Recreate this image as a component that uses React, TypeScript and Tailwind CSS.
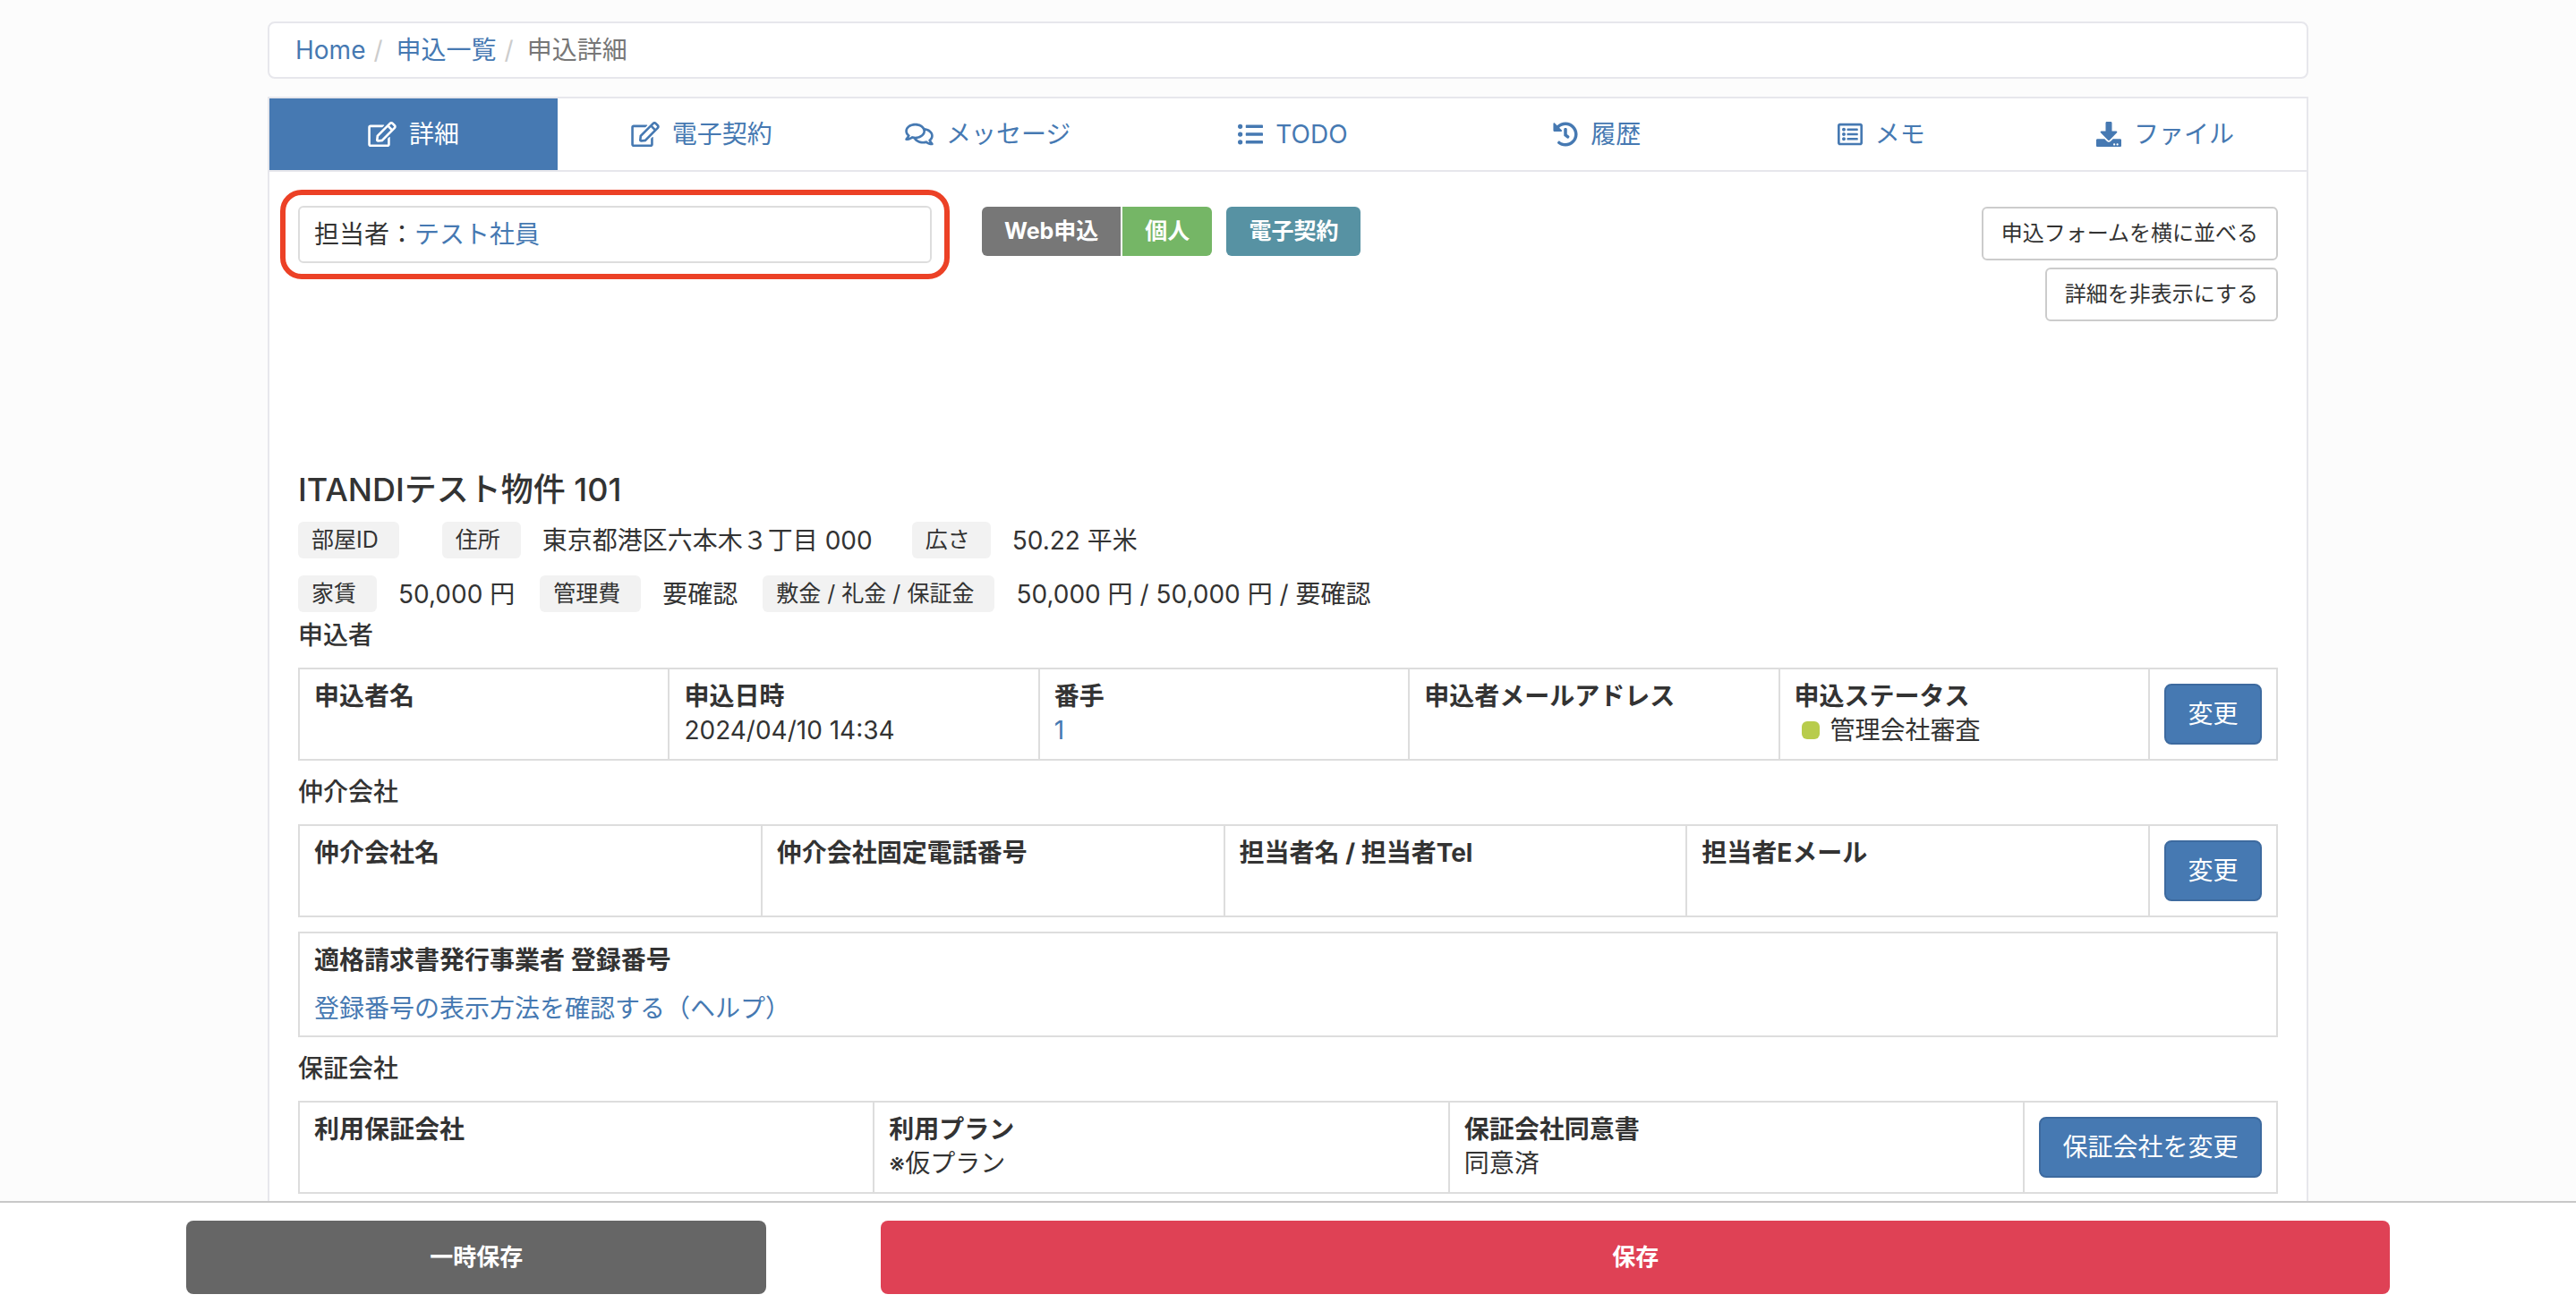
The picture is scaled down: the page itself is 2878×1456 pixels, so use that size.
import {ReactNode} from "react";
import {FaDownload, FaHistory, FaListUl, FaRegComments, FaRegEdit, FaRegListAlt} from "react-icons/fa";

const abas = [
    { titulo: "詳細", icone: FaRegEdit, tamanho: "h-7 w-8", ativa: true },
    { titulo: "電子契約", icone: FaRegEdit, tamanho: "h-7 w-8", ativa: false },
    { titulo: "メッセージ", icone: FaRegComments, tamanho: "h-7 w-8", ativa: false },
    { titulo: "TODO", icone: FaListUl, tamanho: "size-7", ativa: false },
    { titulo: "履歴", icone: FaHistory, tamanho: "size-7", ativa: false },
    { titulo: "メモ", icone: FaRegListAlt, tamanho: "size-7", ativa: false },
    { titulo: "ファイル", icone: FaDownload, tamanho: "size-7", ativa: false },
]

type Coluna = { titulo: string, valor?: ReactNode }

function Etiqueta({children}: { children: ReactNode }) {
    return (
        <dt className="rounded-md bg-[#f2f2f2] pl-[15px] pr-[23px] text-[25px] leading-[41px]">{children}</dt>
    )
}

function Tabela({colunas, botao, largura}: { colunas: Coluna[], botao: string, largura: string }) {
    return (
        <table className="w-full table-fixed border-collapse border-2 border-[#ddd]">
            <tbody>
                <tr className="h-[102px]">
                    {colunas.map(coluna => (
                        <td key={coluna.titulo} className="border-2 border-[#ddd] px-4 align-top pt-[11px] leading-[38px]">
                            <div className="font-bold">{coluna.titulo}</div>
                            <div>{coluna.valor}</div>
                        </td>
                    ))}
                    <td className={`border-2 border-[#ddd] text-center align-middle ${largura}`}>
                        <button type="button" className="rounded-lg border-2 border-[#3d6a9f] bg-[#4679b2] px-6 py-3 text-white">{botao}</button>
                    </td>
                </tr>
            </tbody>
        </table>
    )
}

export default function App() {
    return (
        <div className="min-h-screen bg-[#fcfcfc] font-[Inter,'Noto_Sans_CJK_JP',sans-serif] text-[28px] leading-[40px] text-[#333]">
            <div className="mx-auto flex min-h-screen max-w-[2280px] flex-col pt-6">
                <nav className="rounded-lg border-2 border-[#e7e7ec] bg-white px-[29px] py-[10px]">
                    <ol className="flex">
                        <li><a href="#" className="text-[#4679b2]">Home</a></li>
                        <li><span className="px-[9px] text-[#ccc]">/</span><a href="#" className="ml-[6px] text-[#4679b2]">申込一覧</a></li>
                        <li className="text-[#777]"><span className="px-[9px] text-[#ccc]">/</span><span className="ml-[6px]">申込詳細</span></li>
                    </ol>
                </nav>

                <main className="mt-5 grow border-2 border-b-0 border-[#e7e7ec] bg-white pb-[122px]">
                    <nav className="grid grid-cols-[322fr_322fr_318fr_364fr_316fr_319fr_316fr] border-b-2 border-[#e7e7ec]">
                        {abas.map(aba => (
                            <a
                                key={aba.titulo}
                                href="#"
                                className={`flex h-20 items-center justify-center gap-[14px] ${aba.ativa ? "bg-[#4679b2] text-white" : "text-[#4679b2]"}`}
                            >
                                <aba.icone className={aba.tamanho}/>
                                {aba.titulo}
                            </a>
                        ))}
                    </nav>

                    <div className="px-8">
                        <div className="flex h-[335px] items-start pt-[39px]">
                            <div className="-mx-5 -mt-[19px] w-[748px] rounded-3xl border-6 border-[#ec4126] px-[14px] py-3">
                                <div className="rounded-md border-2 border-[#ddd] px-4 py-[10px]">
                                    担当者：<a href="#" className="text-[#4679b2]">テスト社員</a>
                                </div>
                            </div>
                            <div className="ml-14 flex text-[25px] font-bold leading-[55px] text-white">
                                <span className="rounded-l-md bg-[#777] px-[25px]">Web申込</span>
                                <span className="ml-[2px] rounded-r-md bg-[#75b666] px-[25px]">個人</span>
                                <span className="ml-4 rounded-md bg-[#5792a3] px-[25px]">電子契約</span>
                            </div>
                            <div className="ml-auto flex flex-col items-end gap-2 text-2xl">
                                <button type="button" className="h-[60px] rounded-md border-2 border-[#ccc] px-5">申込フォームを横に並べる</button>
                                <button type="button" className="h-[60px] rounded-md border-2 border-[#ccc] px-5">詳細を非表示にする</button>
                            </div>
                        </div>

                        <h1 className="text-4xl font-medium">ITANDIテスト物件 101</h1>
                        <dl className="mt-4 flex items-center">
                            <Etiqueta>部屋ID</Etiqueta>
                            <dd className="mx-6"></dd>
                            <Etiqueta>住所</Etiqueta>
                            <dd className="ml-6 mr-11">東京都港区六本木３丁目 000</dd>
                            <Etiqueta>広さ</Etiqueta>
                            <dd className="ml-6">50.22 平米</dd>
                        </dl>
                        <dl className="mt-[19px] flex items-center">
                            <Etiqueta>家賃</Etiqueta>
                            <dd className="ml-6 mr-7">50,000 円</dd>
                            <Etiqueta>管理費</Etiqueta>
                            <dd className="ml-6 mr-7">要確認</dd>
                            <Etiqueta>敷金 / 礼金 / 保証金</Etiqueta>
                            <dd className="ml-6">50,000 円 / 50,000 円 / 要確認</dd>
                        </dl>

                        <h2 className="mb-4 mt-[6px] font-medium">申込者</h2>
                        <Tabela
                            largura="w-[143px]"
                            botao="変更"
                            colunas={[
                                { titulo: "申込者名" },
                                { titulo: "申込日時", valor: "2024/04/10 14:34" },
                                { titulo: "番手", valor: <a href="#" className="text-[#4679b2]">1</a> },
                                { titulo: "申込者メールアドレス" },
                                { titulo: "申込ステータス", valor: (
                                    <span className="flex items-center pl-2">
                                        <span className="mr-3 size-5 rounded-md bg-[#b8cc4c]"></span>
                                        管理会社審査
                                    </span>
                                ) },
                            ]}
                        />

                        <h2 className="mb-4 mt-[15px] font-medium">仲介会社</h2>
                        <Tabela
                            largura="w-[143px]"
                            botao="変更"
                            colunas={[
                                { titulo: "仲介会社名" },
                                { titulo: "仲介会社固定電話番号" },
                                { titulo: "担当者名 / 担当者Tel" },
                                { titulo: "担当者Eメール" },
                            ]}
                        />
                        <div className="mt-4 border-2 border-[#ddd] px-4 py-[10px]">
                            <div className="font-bold">適格請求書発行事業者 登録番号</div>
                            <a href="#" className="mt-[14px] block text-[#4679b2]">登録番号の表示方法を確認する（ヘルプ）</a>
                        </div>

                        <h2 className="mb-4 mt-[15px] font-medium">保証会社</h2>
                        <Tabela
                            largura="w-[283px]"
                            botao="保証会社を変更"
                            colunas={[
                                { titulo: "利用保証会社" },
                                { titulo: "利用プラン", valor: "※仮プラン" },
                                { titulo: "保証会社同意書", valor: "同意済" },
                            ]}
                        />
                    </div>
                </main>
            </div>

            <footer className="fixed inset-x-0 bottom-0 border-t-2 border-[#c8c8c8] bg-white pb-[10px] pt-5">
                <div className="mx-auto flex max-w-[2462px] gap-32 text-[26px] font-bold text-white">
                    <button type="button" className="h-[82px] grow-[648] basis-0 rounded-lg bg-[#666]">一時保存</button>
                    <button type="button" className="h-[82px] grow-[1685] basis-0 rounded-lg bg-[#df4155]">保存</button>
                </div>
            </footer>
        </div>
    )
}
